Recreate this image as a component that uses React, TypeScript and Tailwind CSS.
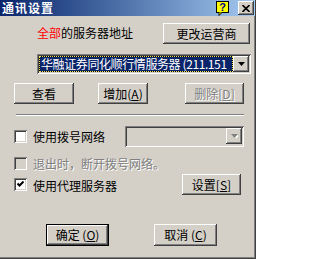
import React from 'react'

const raised =
  'shadow-[inset_-1px_-1px_#404040,inset_1px_1px_#ffffff,inset_-2px_-2px_#808080,inset_2px_2px_#d4d0c8]'
const sunken =
  'shadow-[inset_1px_1px_#808080,inset_-1px_-1px_#ffffff,inset_2px_2px_#404040,inset_-2px_-2px_#d4d0c8]'

function WinButton({
  children,
  className = '',
  disabled = false,
  isDefault = false,
}: {
  children: React.ReactNode
  className?: string
  disabled?: boolean
  isDefault?: boolean
}) {
  return (
    <div
      className={`flex items-center justify-center bg-[#d4d0c8] text-[12px] leading-[12px] ${raised} ${
        isDefault ? 'border border-black' : ''
      } ${disabled ? 'text-[#808080] [text-shadow:1px_1px_0_#ffffff]' : 'text-black'} ${className}`}
    >
      {children}
    </div>
  )
}

function Arrow({ disabled = false }: { disabled?: boolean }) {
  return (
    <svg width="7" height="4" viewBox="0 0 7 4" className="block">
      {disabled && <path d="M1 1h7L4.5 5z" fill="#ffffff" />}
      <path d="M0 0h7L3.5 4z" fill={disabled ? '#808080' : '#000000'} />
    </svg>
  )
}

function DropButton({ disabled = false }: { disabled?: boolean }) {
  return (
    <div className={`w-[16px] h-[16px] shrink-0 flex items-center justify-center bg-[#d4d0c8] ${raised}`}>
      <Arrow disabled={disabled} />
    </div>
  )
}

function CheckBox({ checked = false, disabled = false }: { checked?: boolean; disabled?: boolean }) {
  return (
    <div
      className={`w-[13px] h-[13px] shrink-0 flex items-center justify-center ${sunken} ${
        disabled ? 'bg-[#d4d0c8]' : 'bg-white'
      }`}
    >
      {checked && (
        <svg width="7" height="7" viewBox="0 0 7 7" className="block">
          <path d="M0.5 2.5L2.5 4.5L6.5 0.5" stroke="#000" strokeWidth="2" fill="none" />
        </svg>
      )}
    </div>
  )
}

export default function App() {
  return (
    <div
      className="w-[256px] h-[259px] bg-[#d4d0c8] flex flex-col overflow-hidden shadow-[inset_-1px_-1px_#404040,inset_-2px_-2px_#808080]"
      style={{ fontFamily: '"Noto Sans CJK SC", "Liberation Sans", sans-serif' }}
    >
      {/* Title bar */}
      <div className="h-[16px] mr-[1px] flex items-center bg-linear-to-r from-[#0a246a] to-[#a6caf0]">
        <span className="pl-[2px] text-white font-bold text-[12px] leading-[12px] tracking-[1px]">通讯设置</span>
        <div className="ml-auto flex items-center">
          <svg width="13" height="15" viewBox="0 0 13 15" className="block">
            <rect x="0.5" y="0.5" width="12" height="11" fill="#ffff00" stroke="#000" />
            <path d="M3 11.5 L3 14.5 L6 11.5" fill="#ffff00" stroke="#000" />
            <text x="6.5" y="10" textAnchor="middle" fontSize="11" fontWeight="bold" fill="#000080" fontFamily="Liberation Sans">?</text>
          </svg>
          <div className={`ml-[9px] mr-[1px] w-[16px] h-[14px] flex items-center justify-center bg-[#d4d0c8] ${raised}`}>
            <svg width="8" height="7" viewBox="0 0 8 7" className="block">
              <path d="M0.5 0 L7.5 7 M7.5 0 L0.5 7" stroke="#000" strokeWidth="1.6" />
            </svg>
          </div>
        </div>
      </div>

      {/* Server address row */}
      <div className="mt-[7px] flex items-start pl-[37px] pr-[6px]">
        <span className="mt-[4px] text-[12px] leading-[12px] text-black">
          <span className="text-[#ff0000]">全部</span>的服务器地址
        </span>
        <WinButton className="ml-auto w-[87px] h-[21px]">更改运营商</WinButton>
      </div>

      {/* Server combo */}
      <div className={`mt-[10px] ml-[37px] w-[214px] h-[20px] bg-white p-[2px] flex items-stretch ${sunken}`}>
        <div className="flex-1 min-w-0 bg-black">
          <div className="h-full border border-dotted border-[#f0e060] bg-[#0a246a] bg-clip-padding overflow-hidden whitespace-nowrap text-white text-[12px] leading-[14px] tracking-[-0.4px] pl-[1px]">
            华融证券同化顺行情服务器 (211.151
          </div>
        </div>
        <DropButton />
      </div>

      {/* Buttons */}
      <div className="mt-[9px] flex pl-[14px]">
        <WinButton className="w-[60px] h-[21px]">查看</WinButton>
        <WinButton className="ml-[24px] w-[50px] h-[21px]">
          增加(<span className="underline">A</span>)
        </WinButton>
        <WinButton disabled className="ml-[37px] w-[59px] h-[21px]">
          删除[<span className="underline">D</span>]
        </WinButton>
      </div>

      {/* Separator */}
      <div className="mt-[10px] ml-[16px] w-[228px] h-[2px] border-t border-t-[#808080] border-b border-b-white" />

      {/* Dial-up */}
      <div className="mt-[10px] flex items-center pl-[14px]">
        <CheckBox />
        <span className="ml-[6px] text-[12px] leading-[12px] text-black">使用拨号网络</span>
        <div className={`ml-auto mr-[12px] w-[119px] h-[21px] bg-[#d4d0c8] p-[2px] flex justify-end ${sunken}`}>
          <DropButton disabled />
        </div>
      </div>

      <div className="mt-[10px] flex items-center pl-[14px]">
        <CheckBox disabled />
        <span className="ml-[6px] text-[12px] leading-[12px] text-[#808080] [text-shadow:1px_1px_0_#ffffff]">
          退出时，断开拨号网络。
        </span>
      </div>

      {/* Proxy */}
      <div className="mt-[4px] flex items-center pl-[14px]">
        <CheckBox checked />
        <span className="ml-[6px] mt-[2px] text-[12px] leading-[12px] text-black">使用代理服务器</span>
        <WinButton className="ml-auto mr-[15px] w-[59px] h-[21px]">
          设置[<span className="underline">S</span>]
        </WinButton>
      </div>

      {/* OK / Cancel */}
      <div className="mt-[29px] flex pl-[46px]">
        <WinButton isDefault className="w-[63px] h-[22px]">
          确定 (<span className="underline">O</span>)
        </WinButton>
        <WinButton className="ml-[45px] w-[63px] h-[22px]">
          取消 (<span className="underline">C</span>)
        </WinButton>
      </div>
    </div>
  )
}
